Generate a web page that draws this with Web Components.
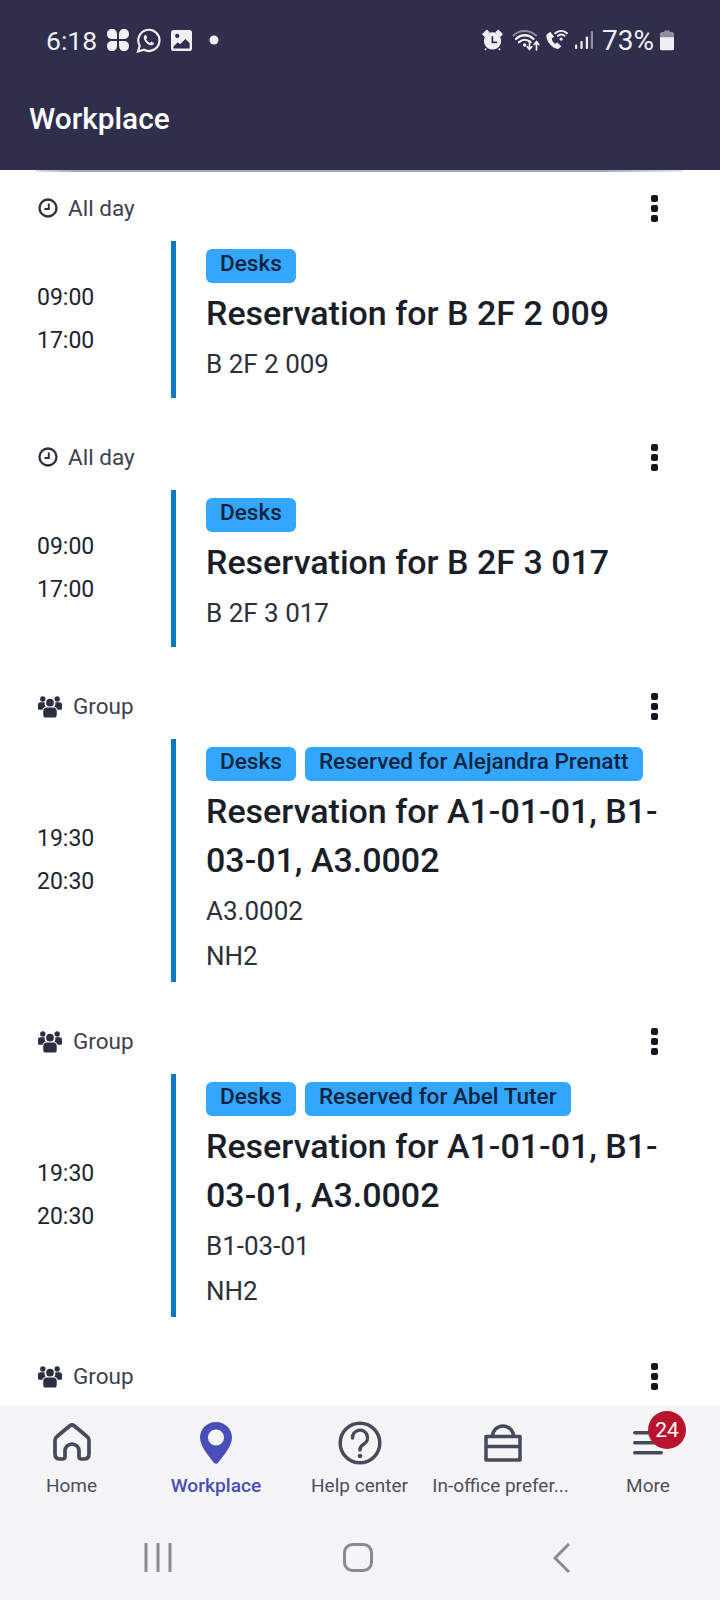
<!DOCTYPE html>
<html><head><meta charset="utf-8">
<style>
html,body{margin:0;padding:0;background:#fff;font-family:Roboto,"Liberation Sans",sans-serif}
body{width:720px;height:1600px;overflow:hidden}
app-shell{height:1600px}
</style></head><body>
<app-shell>
  <status-bar slot="top"></status-bar>
  <app-title slot="top">Workplace</app-title>
  <res-card kind="day" label="All day" start="09:00" end="17:00" tags="Desks" title-text="Reservation for B 2F 2 009" lines="B 2F 2 009"></res-card>
  <res-card kind="day" label="All day" start="09:00" end="17:00" tags="Desks" title-text="Reservation for B 2F 3 017" lines="B 2F 3 017"></res-card>
  <res-card kind="group" label="Group" start="19:30" end="20:30" tags="Desks|Reserved for Alejandra Prenatt" title-text="Reservation for A1-01-01, B1-03-01, A3.0002" lines="A3.0002|NH2"></res-card>
  <res-card kind="group" label="Group" start="19:30" end="20:30" tags="Desks|Reserved for Abel Tuter" title-text="Reservation for A1-01-01, B1-03-01, A3.0002" lines="B1-03-01|NH2"></res-card>
  <res-card kind="group" label="Group" start="" end="" tags="" title-text="" lines=""></res-card>
  <tab-bar slot="bottom"></tab-bar>
  <nav-keys slot="bottom"></nav-keys>
</app-shell>
<script>
const def=(name,html,setup)=>customElements.define(name,class extends HTMLElement{
  connectedCallback(){ if(this.shadowRoot) return; const r=this.attachShadow({mode:'open'}); r.innerHTML=html; if(setup) setup(this,r);} });

def('app-shell',`<style>:host{display:flex;flex-direction:column;width:720px;height:1600px;overflow:hidden}
.top{flex:none;position:relative;z-index:1}.list{flex:1;min-height:0;overflow:hidden}.bottom{flex:none}</style>
<div class="top"><slot name="top"></slot></div><div class="list"><slot></slot></div><div class="bottom"><slot name="bottom"></slot></div>`);

def('status-bar',`<style>:host{display:flex;align-items:center;height:80px;box-sizing:border-box;padding:0 46px 0 46px;background:#2f2e4b;color:#f0f0f4;font:400 26.500px Roboto,sans-serif}
.l,.r{display:flex;align-items:center}.sp{flex:1}svg{display:block;fill:#f0f0f4}
.t{margin-right:9px}.pct{font-size:28px;margin:0 6px 0 9px}</style>
<div class="l"><span class="t">6:18</span>
<svg width="24" height="24" viewBox="0 0 24 24" style="margin-right:6px"><path d="M11 11H6.500C3 11 1 9 1 6C1 3 3 1 6 1C9 1 11 3 11 6.500ZM13 11V6.500C13 3 15 1 18 1C21 1 23 3 23 6C23 9 21 11 17.500 11ZM11 13V17.500C11 21 9 23 6 23C3 23 1 21 1 18C1 15 3 13 6.500 13ZM13 13H17.500C21 13 23 15 23 18C23 21 21 23 18 23C15 23 13 21 13 17.500Z"/></svg>
<svg width="25" height="25" viewBox="0 0 25 25" style="margin-right:10px"><path fill="none" stroke="#f0f0f4" stroke-width="2.200" d="M2 23.500l1.700-5.800A10.600 10.600 0 1 1 8 21.800z"/><path d="M9.300 6.900c-.5 0-1.600.8-1.600 2.700 0 2.400 2 4.900 3.600 6.100 1.900 1.500 4 2 5.300 1.300.9-.5 1.300-1.400 1.200-2.100l-2.500-1.400-1.300 1.400c-1.700-.6-3.300-2.100-3.900-3.800l1.100-1.200L10.100 7z"/></svg>
<svg width="21" height="21" viewBox="0 0 22 22" style="margin-right:17px"><path fill-rule="evenodd" d="M3 0H19a3 3 0 0 1 3 3V19a3 3 0 0 1-3 3H3a3 3 0 0 1-3-3V3a3 3 0 0 1 3-3ZM6.500 4a2.200 2.200 0 1 0 .01 0ZM2.500 17.500V19.500H19.500V13.500L15 9.500L9.500 15L7 12.800Z"/></svg>
<svg width="10" height="10" viewBox="0 0 10 10"><circle cx="5" cy="5" r="4.500"/></svg></div>
<div class="sp"></div>
<div class="r">
<svg width="21" height="22" viewBox="0 0 22 22" style="margin-right:9px"><path d="M1 5L5 1L7 2.800L2.800 6.800ZM21 5L17 1L15 2.800L19.200 6.800ZM4.500 20L3 21.500M17.500 20L19 21.500" stroke="#f0f0f4" stroke-width="1.500"/><path fill-rule="evenodd" d="M11 3a9 9 0 1 0 .01 0ZM10 7h1.800v5.500H16v1.800H10Z"/></svg>
<svg width="29" height="22" viewBox="0 0 28 22" style="margin-right:4px;fill:none;stroke-linecap:round"><path d="M1 6.500C7 .5 17 .5 23.500 6.500" stroke="#8d8da3" stroke-width="2"/><path d="M3.500 10C8.500 5 16 5 21 10M6.500 13.200C10 10 14.500 10 18 13.200" stroke="#f0f0f4" stroke-width="2.300"/><circle cx="12.200" cy="16" r="1.800" fill="#f0f0f4"/><path d="M17 12v8M14.700 17.700L17 20.500L19.300 17.700M24 21v-8M21.700 15.500L24 12.700L26.300 15.500" stroke="#f0f0f4" stroke-width="1.700"/></svg>
<svg width="23" height="22" viewBox="0 0 24 22" style="margin-right:7px"><path d="M5.500 2.500L1.500 5.500C.5 11 7 20 14 20.500L17 17.500L13 13.500L10.500 15C8.500 13.500 7.500 12 7 9.500L9.500 7.500Z"/><path d="M10 4.500C14 .5 20 .5 23.500 4.500M12.700 7.200C15.500 4.800 18.500 4.800 21 7.200" fill="none" stroke="#f0f0f4" stroke-width="2"/><circle cx="16.800" cy="10" r="1.700"/></svg>
<svg width="18" height="20" viewBox="0 0 20 20"><rect x="0" y="15" width="2.500" height="5" rx="1"/><rect x="6" y="11" width="2.500" height="9" rx="1"/><rect x="12" y="6" width="2.500" height="14" rx="1"/><rect x="17.500" y="0" width="2.500" height="20" rx="1" fill="#8d8da3"/></svg>
<span class="pct">73%</span>
<svg width="14" height="21" viewBox="0 0 15 21"><path d="M5 0H10V2H13A2 2 0 0 1 15 4V19A2 2 0 0 1 13 21H2A2 2 0 0 1 0 19V4A2 2 0 0 1 2 2H5Z" fill="#f0f0f4"/><path d="M5 0H10V2H13A2 2 0 0 1 15 4V7H0V4A2 2 0 0 1 2 2H5Z" fill="#8d8da3"/></svg>
</div>`);

def('app-title',`<style>:host{display:flex;align-items:center;height:90px;box-sizing:border-box;padding:0 0 14px 29px;background:#2f2e4b;color:#fff;font:500 29.800px Roboto,sans-serif;position:relative}
:host::after{content:"";position:absolute;left:36px;right:37px;bottom:-2px;height:2px;background:linear-gradient(90deg,#dcdce4,#a8a8bc 6%,#a8a8bc 88%,#e4e4ea)}</style><slot></slot>`);

const ICONS={
 day:`<svg width="20" height="20" viewBox="0 0 20 20" style="margin-right:10px"><circle cx="10" cy="10" r="8.500" fill="none" stroke="#2b2f3d" stroke-width="2.300"/><path d="M10.800 5.500V11H6.500" fill="none" stroke="#2b2f3d" stroke-width="2"/></svg>`,
 group:`<svg width="24" height="23" viewBox="0 0 25 23" style="margin-right:11px" fill="#2b3040"><circle cx="5" cy="3.700" r="2.800"/><circle cx="20" cy="3.700" r="2.800"/><circle cx="12.500" cy="7.500" r="4"/><path d="M0 9.500C0 7.800 1.300 7 2.500 7H7C6.700 9 7 10.500 8 11.700C6 12.300 4.800 13.500 4.500 15H1.500C.5 15 0 14.300 0 13.500ZM25 9.500C25 7.800 23.700 7 22.500 7H18C18.300 9 18 10.500 17 11.700C19 12.300 20.200 13.500 20.500 15H23.500C24.500 15 25 14.300 25 13.500ZM9 12.500H16C18 12.500 19.500 14 19.500 16V20.500C19.500 22 18.500 23 17 23H8C6.500 23 5.500 22 5.500 20.500V16C5.500 14 7 12.500 9 12.500Z"/></svg>`
};
def('res-card',`<style>:host{display:block;color:#1b1f2a}
.meta{display:flex;align-items:center;height:34px;margin:21px 0 16px;padding:0 0 0 38px;color:#3d4150;font-size:22.500px;position:relative}
.kebab{position:absolute;left:651px;top:4px;width:7px;height:27px;display:flex;flex-direction:column;justify-content:space-between}
.kebab i{display:block;width:7px;height:7px;border-radius:2px;background:#14171f}
.row{display:flex;min-height:157px;margin-bottom:42px}
.time{width:171px;box-sizing:border-box;padding:0 0 2px 37px;display:flex;flex-direction:column;justify-content:center;font-size:23px;line-height:43px;color:#20242f}
.body{flex:1;border-left:5px solid #0a78c8;padding:8px 40px 3px 30px;box-sizing:border-box}
.tags{display:flex;gap:9px}
.tag{height:34px;line-height:30px;padding:0 14px;border-radius:6px;background:#33a6fe;color:#0d2440;font-weight:500;font-size:22.600px;white-space:nowrap}
h3{margin:6px 0 4px;font-weight:500;font-size:34px;line-height:49px;color:#1a1e28}
.loc{font-size:26px;line-height:45px;color:#2c303c}
.loc:only-child{margin-top:1px}
</style>
<div class="meta"><span id="ic" style="display:flex"></span><span id="lb"></span><div class="kebab"><i></i><i></i><i></i></div></div>
<div class="row" id="row"><div class="time" id="time"></div><div class="body"><div class="tags" id="tags"></div><h3 id="ttl"></h3><div id="locs"></div></div></div>`,
(h,r)=>{
  r.getElementById('ic').innerHTML=ICONS[h.getAttribute('kind')];
  r.getElementById('lb').textContent=h.getAttribute('label');
  const s=h.getAttribute('start');
  if(!s){r.getElementById('row').style.display='none';return;}
  r.getElementById('time').innerHTML=`<div>${s}</div><div>${h.getAttribute('end')}</div>`;
  r.getElementById('tags').innerHTML=h.getAttribute('tags').split('|').map(t=>`<span class="tag">${t}</span>`).join('');
  r.getElementById('ttl').textContent=h.getAttribute('title-text');
  r.getElementById('locs').innerHTML=h.getAttribute('lines').split('|').map(t=>`<div class="loc">${t}</div>`).join('');
});

const TAB=[
 ['Home',`<svg width="40" height="40" viewBox="0 0 40 40" fill="none" stroke="#454a5c" stroke-width="3.700" stroke-linejoin="round"><path d="M3 17Q3 15 5 13.500L17.500 3Q20 1 22.500 3L35 13.500Q37 15 37 17V31Q37 36 32 36H29.500Q27 36 27 33.500V28A7 7 0 0 0 13 28V33.500Q13 36 10.500 36H8Q3 36 3 31Z"/></svg>`],
 ['Workplace',`<svg width="32" height="42" viewBox="0 0 32 42"><path fill="#4a4eb9" fill-rule="evenodd" d="M16 0C25 0 32 7 32 15.500C32 24 24 33 18 41C17 42 15 42 14 41C8 33 0 24 0 15.500C0 7 7 0 16 0ZM16 7.500a8 8 0 1 0 .01 0Z"/></svg>`,1],
 ['Help center',`<svg width="44" height="44" viewBox="0 0 44 44" fill="none" stroke="#454a5c" stroke-width="3.500"><circle cx="22" cy="22" r="19.800"/><path d="M14.500 17A7.500 7.500 0 1 1 26 23C23 24.500 22 26 22 29" stroke-linecap="round"/><circle cx="22" cy="35" r="2.300" fill="#454a5c" stroke="none"/></svg>`],
 ['In-office prefer...',`<svg style="margin-left:4px" width="38" height="38" viewBox="0 0 38 38" fill="none" stroke="#454a5c" stroke-width="3.500" stroke-linejoin="round"><path d="M2 12.500H36V36H2ZM2 22.500H36M8.500 12.500A10.500 10.500 0 0 1 29.500 12.500"/></svg>`],
 ['More',`<svg width="30" height="24" viewBox="0 0 30 24" fill="#454a5c"><rect y="0" width="30" height="3.500" rx="1.700"/><rect y="10" width="30" height="3.500" rx="1.700"/><rect y="20" width="30" height="3.500" rx="1.700"/></svg>`]
];
def('tab-bar',`<style>:host{display:flex;height:103px;box-sizing:border-box;background:#f5f5f8;padding:16px 0 0 0}
.t{position:relative;display:flex;flex-direction:column;align-items:center;font-size:19px;color:#4b4f5c;white-space:nowrap;box-sizing:border-box}
.ic{height:44px;display:flex;align-items:center;justify-content:center;margin-bottom:9px}
.a{color:#4a4eb9;font-weight:500;font-size:19.200px}
.badge{position:absolute;right:-23px;top:-10px;width:38px;height:38px;border-radius:50%;background:#b7152e;color:#fff;font-size:21px;line-height:38px;text-align:center}
</style><div id="w" style="display:contents"></div>`,
(h,r)=>{
 const w=[143,146,141,141,149];
 r.getElementById('w').innerHTML=TAB.map((t,i)=>`<div class="t ${t[2]?'a':''}" style="width:${w[i]}px${i==4?';padding-left:5px':''}">
   <div class="ic" style="position:relative">${t[1]}${t[0]=='More'?'<span class="badge">24</span>':''}</div><div>${t[0]}</div></div>`).join('');
});

def('nav-keys',`<style>:host{display:flex;height:92px;background:#f5f5f8;align-items:flex-start}
svg{display:block;fill:none;stroke:#8a8a8f;stroke-width:3;margin-top:35px}</style>
<svg style="margin-left:144px" width="28" height="29" viewBox="0 0 28 29"><path d="M2 0V29M14 0V29M26 0V29"/></svg>
<svg style="margin-left:171px" width="30" height="29" viewBox="0 0 30 29"><rect x="1.500" y="1.500" width="27" height="26" rx="8"/></svg>
<svg style="margin-left:180px" width="17" height="30" viewBox="0 0 17 30"><path d="M16 1L2 15L16 29"/></svg>`);
</script>
</body></html>
